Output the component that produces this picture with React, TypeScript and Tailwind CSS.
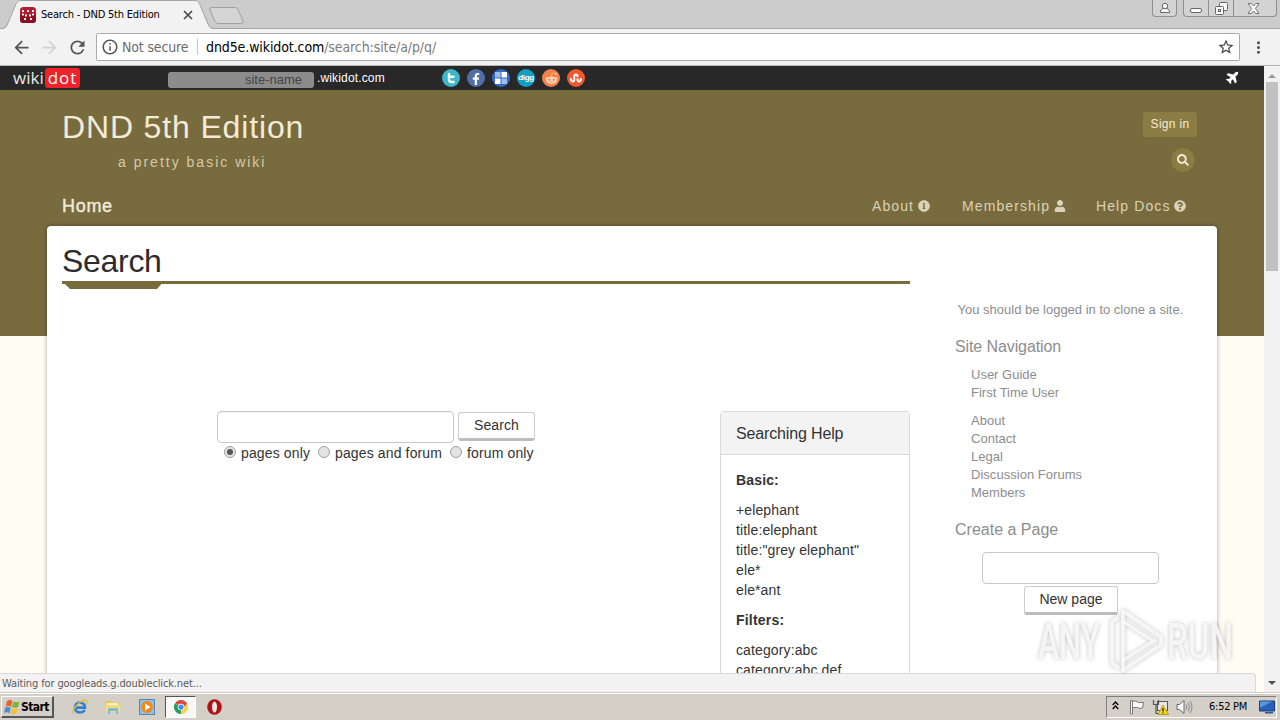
import type { ReactNode } from 'react'
import { FaFacebookF, FaInfoCircle, FaPlane, FaQuestionCircle, FaSearch, FaUser, FaRedditAlien, FaStumbleupon } from 'react-icons/fa'
import { MdArrowBack, MdArrowForward, MdInfoOutline, MdMoreVert, MdRefresh, MdStarBorder } from 'react-icons/md'

const ui = "font-['DejaVu_Sans_Condensed','DejaVu_Sans',sans-serif] [font-stretch:condensed]"

const guideLinks = ['User Guide', 'First Time User']
const siteLinks = ['About', 'Contact', 'Legal', 'Discussion Forums', 'Members']
const basicHelp = ['+elephant', 'title:elephant', 'title:"grey elephant"', 'ele*', 'ele*ant']
const filterHelp = ['category:abc', 'category:abc,def']

function TabStrip() {
  return (
    <div className="relative flex h-7 shrink-0 bg-[#cccccc]">
      <svg className="absolute left-0 top-0" width="250" height="29">
        <path d="M0 28.5H3Q6 28 7.500 24L16 4Q18 0.500 21 0.500H195Q198 0.500 199.500 4L208 24Q210 28.500 213 28.500H250" fill="none" stroke="#a3a3a3" />
        <path d="M3 29Q7 28 8 24.500L16.500 4Q18 1 21 1H195Q198 1 199 4L207.500 24.500Q209 28 212 29Z" fill="#f2f2f2" />
        <path d="M212 7.500H235Q237 7.500 238 9.500L243 21Q243.500 23.500 241 23.500H218Q216 23.500 215 21.500L210 10Q209 7.500 212 7.500Z" fill="#d4d4d4" stroke="#a0a0a0" />
      </svg>
      <div className="relative flex h-7 w-[197px] items-center pl-5 pt-px">
        <svg width="16" height="16" viewBox="0 0 16 16">
          <rect width="16" height="16" rx="3.500" fill="#b01c30" />
          <path d="M0 8H16V12.500Q16 16 12.500 16H3.500Q0 16 0 12.500Z" fill="#8a1222" />
          <g fill="#fff">
            <rect x="2" y="3" width="2" height="2" rx="0.500" />
            <rect x="7" y="3" width="2" height="2" rx="0.500" />
            <rect x="12" y="3" width="2" height="2" rx="0.500" />
            <rect x="2" y="6.500" width="2" height="2" rx="0.500" />
            <rect x="5" y="7.500" width="2" height="2" rx="0.500" />
            <rect x="9" y="7.500" width="2" height="2" rx="0.500" />
            <rect x="12" y="6.500" width="2" height="2" rx="0.500" />
            <rect x="4" y="11" width="2" height="2" rx="0.500" />
            <rect x="10" y="11" width="2" height="2" rx="0.500" />
          </g>
        </svg>
        <span className={`${ui} ml-[5px] w-[142px] whitespace-nowrap text-[11px] leading-7 tracking-[-0.2px] text-black`}>Search - DND 5th Edition</span>
        <svg width="10" height="10" viewBox="0 0 10 10" stroke="#4a4a4a" strokeWidth="1.700">
          <path d="M1 1l8 8M9 1L1 9" />
        </svg>
      </div>
      <div className="ml-auto mr-[3px] flex gap-[6px]">
        <div className="flex h-[17px] w-[25px] items-center justify-center rounded-b border border-t-0 border-[#8f8f8f] bg-[#d3d3d3]">
          <svg width="12" height="12" viewBox="0 0 12 12" fill="#fafafa" stroke="#666">
            <path d="M1.500 10.500V9Q2 7 4.500 6.500H7.500Q10 7 10.500 9V10.500Z" />
            <circle cx="6" cy="4" r="2.700" />
          </svg>
        </div>
        <div className="flex h-[17px] w-[94px] rounded-b border border-t-0 border-[#8f8f8f] bg-[#d3d3d3]">
          <div className="flex w-[25px] justify-center border-r border-[#8f8f8f] pt-[8px]">
            <div className="h-[5px] w-3 rounded-[2px] border border-[#666] bg-[#fafafa]" />
          </div>
          <div className="flex w-[25px] justify-center border-r border-[#8f8f8f] pt-[2px]">
            <svg width="13" height="13" viewBox="0 0 13 13" fill="#fafafa" stroke="#666">
              <rect x="4.500" y="0.500" width="8" height="8" rx="1" />
              <rect x="0.500" y="4.500" width="8" height="8" rx="1" />
              <rect x="3.500" y="7.500" width="2" height="2" fill="#ddd" />
            </svg>
          </div>
          <div className="flex flex-1 justify-center pr-[4px] pt-[3px]">
            <svg width="13" height="11" viewBox="0 0 13 11" fill="#fafafa" stroke="#666" strokeWidth="0.900">
              <path d="M1 .5H4.200L6.500 3L8.800 .5H12L8.400 5.500L12 10.500H8.800L6.500 8L4.200 10.500H1L4.600 5.500Z" />
            </svg>
          </div>
        </div>
      </div>
    </div>
  )
}

function Toolbar() {
  return (
    <div className="flex h-[38px] shrink-0 items-center border-b border-[#b5b5b5] border-t border-t-[#a8a8a8] bg-[#f2f2f2]">
      <div className="flex w-24 items-center gap-[7px] pl-[11px] text-[21px] text-[#555]">
        <MdArrowBack />
        <MdArrowForward className="text-[#d2d2d2]" />
        <MdRefresh />
      </div>
      <div className={`${ui} flex h-7 w-[1144px] items-center rounded-[2px] border border-[#ababab] bg-white text-sm`}>
        <MdInfoOutline className="ml-1 text-[18px] text-[#555]" />
        <span className="ml-[3px] w-[75px] whitespace-nowrap tracking-[-0.15px] text-[#6b6b6b]">Not secure</span>
        <div className="h-4 w-px bg-[#c5c5c5]" />
        <span className="ml-2 flex-1 tracking-[-0.1px] text-black">
          dnd5e.wikidot.com<span className="text-[#7b7b7b]">/search:site/a/p/q/</span>
        </span>
        <MdStarBorder className="mr-1 text-[18px] text-[#444]" />
      </div>
      <MdMoreVert className="ml-[9px] text-[19px] text-[#555]" />
    </div>
  )
}

function Social({ color, children }: { color: string; children: ReactNode }) {
  return (
    <div className={`flex size-[18px] items-center justify-center overflow-hidden rounded-full text-white ${color}`}>
      {children}
    </div>
  )
}

function WikidotBar() {
  return (
    <div className="flex h-6 items-center bg-[#282828] text-xs text-white">
      <div className="flex w-[154px] items-center pl-[13px] font-['Open_Sans',sans-serif] text-[17px] leading-[20px]">
        <span className="w-8 text-[#e8e8e8]">wiki</span>
        <span className="h-5 w-[35px] rounded-[3px] bg-[#ee2228] text-center leading-[19px] tracking-[1px]">dot</span>
      </div>
      <div className="ml-[14px] mt-1 h-4 w-[146px] rounded-[3px] bg-[#8c8c8c] pr-[12px] text-right text-[13px] leading-4 text-[#444]">site-name</div>
      <span className="ml-[3px] w-[125px] tracking-[0.15px]">.wikidot.com</span>
      <div className="flex gap-[7px]">
        <Social color="bg-[#3bb8c9]">
          <svg width="12" height="12" viewBox="0 0 12 12" fill="none" stroke="#fff" strokeWidth="2.400" strokeLinecap="round">
            <path d="M4 2V7.500Q4 10 6.500 10H8.500M4 4.700H8.500" />
          </svg>
        </Social>
        <Social color="bg-[#506ea9]"><FaFacebookF className="mt-[2px] text-[12px]" /></Social>
        <Social color="bg-[#3569c8]">
          <svg width="12" height="12" viewBox="0 0 12 12">
            <path d="M0 0H5.500V5.500H0ZM6.500 6.500H12V12H6.500Z" fill="#9dbdf0" />
            <path d="M6.500 0H12V5.500H6.500ZM0 6.500H5.500V12H0Z" fill="#fff" />
          </svg>
        </Social>
        <Social color="bg-[#129fc0]"><span className="pb-px text-[8px] font-bold leading-[10px] tracking-[-0.4px]">digg</span></Social>
        <Social color="bg-[#f58049]"><FaRedditAlien className="text-[13px] text-[#ffd0b5]" /></Social>
        <Social color="bg-[#f0592f]"><FaStumbleupon className="text-[12px]" /></Social>
      </div>
      <FaPlane className="mb-[3px] ml-auto mr-[24px] -rotate-45 text-[14px]" />
    </div>
  )
}

function SiteHeader() {
  return (
    <header className="flex h-[136px] justify-between pl-[62px] text-[#f3ead8]">
      <div>
        <h1 className="mt-[17px] text-[32px] leading-10 tracking-[0.85px]">DND 5th Edition</h1>
        <p className="ml-14 mt-[5px] text-sm leading-5 tracking-[2px] text-[#d5c9a6]">a pretty basic wiki</p>
        <div className="mt-[22px] text-lg leading-6 tracking-[0.7px] [-webkit-text-stroke:0.4px]">Home</div>
      </div>
      <div className="flex w-[393px] flex-col pt-[22px]">
        <div className="ml-[272px] h-[25px] w-[54px] rounded-[3px] bg-[#8b7c43] text-center text-xs leading-[25px] tracking-[0.3px]">Sign in</div>
        <div className="ml-[299px] mt-[10px] flex size-[26px] items-center justify-center rounded-full border border-[#76693a] bg-[#8b7c43] text-[12px]">
          <FaSearch />
        </div>
        <nav className="ml-px mt-[21px] flex text-sm leading-6 tracking-[1.1px] text-[#dcd2b8]">
          <span className="flex w-[90px] items-center gap-1">About <FaInfoCircle className="text-xs" /></span>
          <span className="flex w-[134px] items-center gap-1">Membership <FaUser className="text-xs" /></span>
          <span className="flex items-center gap-1">Help Docs <FaQuestionCircle className="text-xs" /></span>
        </nav>
      </div>
    </header>
  )
}

function Radio({ label, checked }: { label: string; checked?: boolean }) {
  return (
    <span className="flex items-center">
      <span className="mb-0.5 mr-[5px] flex size-3 items-center justify-center rounded-full border border-[#a2a2a2] bg-[#e4e4e4]">
        {checked && <span className="size-[6px] rounded-full bg-[#555]" />}
      </span>
      {label}
    </span>
  )
}

function SearchForm() {
  return (
    <div className="ml-[155px]">
      <div className="flex gap-1">
        <div className="h-8 w-[237px] rounded border border-[#c8c8c8] bg-white shadow-[inset_0_1px_1px_rgba(0,0,0,0.05)]" />
        <div className="mt-px h-[29px] w-[77px] rounded-[3px] border border-b-[3px] border-[#ccc] border-b-[#bdbdbd] text-center leading-[25px] tracking-[0.1px]">Search</div>
      </div>
      <div className="ml-[7px] flex gap-2 leading-5 tracking-[0.13px]">
        <Radio label="pages only" checked />
        <Radio label="pages and forum" />
        <Radio label="forum only" />
      </div>
    </div>
  )
}

function HelpPanel() {
  return (
    <div className="w-[190px] rounded-t border border-[#d9d9d9] tracking-[0.12px]">
      <div className="h-[43px] border-b border-[#d9d9d9] bg-[#f3f3f3] pl-[15px] text-base leading-[43px] tracking-[-0.15px]">Searching Help</div>
      <div className="pl-[15px] pt-[15px] leading-5">
        <b className="mb-[10px] block tracking-[0.15px]">Basic:</b>
        {basicHelp.map((t) => <div key={t}>{t}</div>)}
        <b className="my-[10px] block tracking-[0.2px]">Filters:</b>
        {filterHelp.map((t) => <div key={t}>{t}</div>)}
      </div>
    </div>
  )
}

function Sidebar() {
  return (
    <aside className="w-[250px] pt-[75px] text-[13px] leading-[18px] text-[#8d8d8d]">
      <p className="ml-[2.500px] whitespace-nowrap">You should be logged in to clone a site.</p>
      <h3 className="mt-[17px] text-base leading-[22px] tracking-[-0.1px]">Site Navigation</h3>
      <div className="ml-4 mt-2">
        {guideLinks.map((t) => <div key={t}>{t}</div>)}
      </div>
      <div className="ml-4 mt-[10px] tracking-[0.03px]">
        {siteLinks.map((t) => <div key={t}>{t}</div>)}
      </div>
      <h3 className="mt-[17px] text-base leading-[22px]">Create a Page</h3>
      <div className="ml-[27px] mt-[11px] h-8 w-[177px] rounded border border-[#c8c8c8]" />
      <div className="ml-[69px] mt-[2px] h-[29px] w-[94px] rounded-[3px] border border-b-[3px] border-[#ccc] border-b-[#bdbdbd] text-center text-sm leading-[25px] text-[#333]">New page</div>
    </aside>
  )
}

function Watermark() {
  return (
    <svg className="absolute left-[1030px] top-[536px] drop-shadow-[0_0_2px_rgba(0,0,0,0.28)]" width="230" height="80" fontFamily="Roboto, sans-serif" fontSize="50" fontWeight="500">
      <g fill="#fafafa" fillOpacity="0.85">
        <text x="8" y="57" textLength="62" lengthAdjust="spacingAndGlyphs">ANY</text>
        <text x="137" y="57" textLength="66" lengthAdjust="spacingAndGlyphs">RUN</text>
      </g>
      <g fill="none" stroke="#fafafa" strokeOpacity="0.85" strokeWidth="4" strokeLinejoin="round">
        <path d="M93 9L131 35V43L93 68Z" />
        <path d="M92 19L123 39L92 59" strokeWidth="3" />
        <path d="M82 61V20L88 15M82 61L89 66" />
      </g>
    </svg>
  )
}

function Scrollbar() {
  return (
    <div className="flex w-4 flex-col items-center justify-between bg-[#f1f1f1]">
      <div className="flex flex-col items-center">
        <div className="mt-[8px] h-0 w-0 border-x-4 border-b-4 border-x-transparent border-b-[#9a9a9a]" />
        <div className="mt-[4px] h-[189px] w-3 bg-[#c1c1c1]" />
      </div>
      <div className="mb-[7px] h-0 w-0 border-x-4 border-t-4 border-x-transparent border-t-[#505050]" />
    </div>
  )
}

function Taskbar() {
  return (
    <div className={`${ui} flex h-7 shrink-0 border-t border-[#d4d0c8] bg-[#d4d0c8] text-[11px] text-black`}>
      <div className="flex flex-1 border-t border-white pl-px">
        <div className="mt-[2px] flex h-[22px] w-[53px] items-center border border-b-2 border-r-2 border-[#fff] border-b-[#555] border-r-[#555] pl-[2px]">
          <svg width="16" height="16" viewBox="0 0 16 16">
            <path d="M3 2Q6 0 8.500 2L7 8Q4 6 1.500 7.500Z" fill="#e8622c" />
            <path d="M9.500 2.500Q12 4 15.500 2.500L14 8Q11 9.500 8 8Z" fill="#7fb43c" />
            <path d="M1.200 8.500Q4 7 6.700 9L5.300 14.500Q3 12.500 0 14Z" fill="#4a8fd8" />
            <path d="M7.700 9Q10.500 11 13.700 9.200L12.300 14.500Q9.500 16 6.200 14.500Z" fill="#f2c034" />
          </svg>
          <b className="ml-px text-[12px] tracking-[-0.6px]">Start</b>
        </div>
        <div className="ml-[18px] flex w-[150px] items-center">
          <svg width="16" height="16" viewBox="0 0 16 16" fill="none">
            <path d="M12.800 11Q11 13.500 8 13.500Q3 13 3 8.500Q3.500 3.500 8 3.500Q13 4 13 8.600H4" stroke="#2f83d0" strokeWidth="2.600" />
            <path d="M2 15Q-1 13 4 7Q10 0 14.500 1.500Q15.500 2.500 14 5" stroke="#e7b73a" strokeWidth="1.300" />
          </svg>
          <svg className="ml-[17px]" width="16" height="16" viewBox="0 0 16 16">
            <path d="M1 2H6L7 3.500H14V13H1Z" fill="#e9c65a" />
            <path d="M2 4H13V7H2Z" fill="#fff3b8" />
            <path d="M1 6H15V13H1Z" fill="#f4dc7d" />
            <path d="M3 15V10Q3 9 4 9H12Q13 9 13 10V15H11V12H5V15Z" fill="#79bce0" />
          </svg>
          <svg className="ml-[18px]" width="16" height="16" viewBox="0 0 16 16">
            <rect x="0.500" y="0.500" width="15" height="15" fill="#8cc2e8" stroke="#5388b5" />
            <circle cx="8" cy="8" r="6" fill="#f08a1e" />
            <path d="M6 4.500L11.500 8L6 11.500Z" fill="#fff" />
          </svg>
          <div className="ml-[10px] flex h-[22px] w-[31px] shrink-0 items-center justify-center border border-[#555] border-b-white border-r-white bg-[#f8f8f7]">
            <svg width="14" height="14" viewBox="0 0 16 16">
              <path d="M8 8L1.070 4A8 8 0 0 1 14.930 4Z" fill="#dd4b3e" />
              <path d="M8 8L14.930 4A8 8 0 0 1 8 16Z" fill="#fdd049" />
              <path d="M8 8L8 16A8 8 0 0 1 1.070 4Z" fill="#21a05a" />
              <path d="M8 4H14.930L10 9.500Z" fill="#dd4b3e" />
              <circle cx="8" cy="8" r="3.800" fill="#fff" />
              <circle cx="8" cy="8" r="3" fill="#4688ee" />
            </svg>
          </div>
          <svg className="ml-[11px] shrink-0" width="15" height="16" viewBox="0 0 15 16">
            <ellipse cx="7.500" cy="8" rx="7.300" ry="7.700" fill="#b11217" />
            <ellipse cx="7.500" cy="8" rx="2.500" ry="5.500" fill="#f5e5e0" />
          </svg>
        </div>
        <div className="ml-auto mr-[3px] mt-[2px] flex h-[22px] w-[171px] items-center border border-[#808080] border-b-white border-r-white">
          <svg className="-mt-1 ml-[5px]" width="7" height="9" viewBox="0 0 7 9" fill="none" stroke="#000" strokeWidth="1.300">
            <path d="M.7 4L3.500 1L6.300 4M.7 8L3.500 5L6.300 8" />
          </svg>
          <svg className="ml-[10px]" width="16" height="16" viewBox="0 0 16 16" fill="#fff" stroke="#777">
            <path d="M1.500 1.500H3.500V15H1.500Z" />
            <path d="M3.500 2.500Q7 1 9.500 3.500H14.500L13.500 9Q11 10 8.500 8.500Q6 8 3.500 9Z" />
          </svg>
          <svg className="ml-[7px] shrink-0" width="17" height="16" viewBox="0 0 17 16">
            <rect x="5.500" y="2.500" width="10" height="9" fill="#e8e8e8" stroke="#555" />
            <path d="M1.500 1V5.500H6.500V1M4 5.500V14.500H8" fill="none" stroke="#555" strokeWidth="1.200" />
            <path d="M11 6L16.500 15.500H6Z" fill="#f6d51f" stroke="#a98d00" strokeWidth="0.700" />
            <path d="M11 9V12.500M11 13.500V14.600" stroke="#222" strokeWidth="1.300" />
          </svg>
          <svg className="ml-[7px] shrink-0" width="17" height="16" viewBox="0 0 17 16" fill="none" stroke="#888">
            <path d="M1 5.500H3.500L8 1.500V14.500L3.500 10.500H1Z" fill="#fff" stroke="#666" />
            <path d="M10 5.500Q11.500 8 10 10.500M12 3.500Q15 8 12 12.500M14 2Q18 8 14 14" />
          </svg>
          <span className="ml-[16px] w-[41px] whitespace-nowrap tracking-[-0.25px]">6:52 PM</span>
          <svg className="ml-[9px] shrink-0" width="16" height="14" viewBox="0 0 16 14">
            <path d="M0.500 1H15.500V11H0.500Z" fill="#2862b8" stroke="#173f80" />
            <path d="M1 1.500H13L1 8Z" fill="#5b95dc" />
            <path d="M6 12H14V13.500H6Z" fill="#35588e" />
          </svg>
        </div>
      </div>
    </div>
  )
}

export default function App() {
  return (
    <div className="flex h-[720px] w-[1280px] flex-col overflow-hidden bg-white font-['Liberation_Sans',Arial,sans-serif]">
      <TabStrip />
      <Toolbar />
      <div className="relative flex h-[626px] shrink-0 overflow-hidden">
        <div className="h-[626px] w-[1264px] overflow-hidden">
          <WikidotBar />
          <div className="h-[602px] bg-[linear-gradient(#786b3e_246px,#fffcf3_246px)]">
            <SiteHeader />
            <main className="ml-[47px] flex h-[500px] w-[1170px] rounded-t bg-white pl-[15px] text-sm text-[#333] shadow-[0_0_4px_rgba(0,0,0,0.35)]">
              <div className="mr-[45px] w-[848px]">
                <h2 className="mt-[14px] h-[41px] border-b-[3px] border-[#786b3e] text-[32px] leading-[42px] tracking-[-0.3px] box-content text-[#2c2c2c]">Search</h2>
                <svg className="-mt-[3px] block" width="102" height="8">
                  <path d="M0 0H102L95 8H8Z" fill="#786b3e" />
                </svg>
                <div className="mt-[122px] flex justify-between">
                  <SearchForm />
                  <HelpPanel />
                </div>
              </div>
              <Sidebar />
            </main>
          </div>
        </div>
        <Scrollbar />
        {/* loading status bubble */}
        <div className={`${ui} absolute bottom-0 left-0 h-[19px] w-[1256px] rounded-tr border-r border-t border-[#d8d8d8] bg-[#f2f2f2] pl-[2px] text-[11px] leading-[19px] tracking-[-0.13px] text-[#5a5a5a]`}>
          Waiting for googleads.g.doubleclick.net...
        </div>
        <Watermark />
      </div>
      <Taskbar />
    </div>
  )
}
